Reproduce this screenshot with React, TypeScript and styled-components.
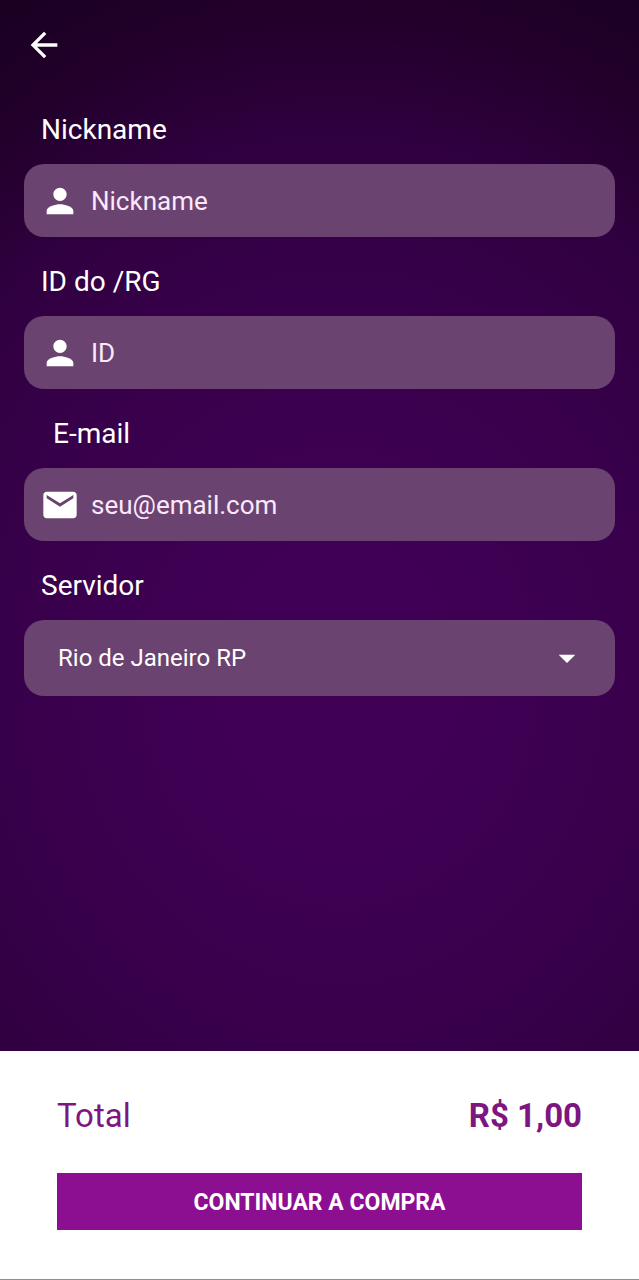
import React, { useState } from "react";
import styled, { createGlobalStyle } from "styled-components";
import { MdArrowBack, MdArrowDropDown, MdEmail, MdPerson } from "react-icons/md";

const GlobalStyle = createGlobalStyle`
  *, *::before, *::after { box-sizing: border-box; }
  body { margin: 0; background: #2c003b; }
`;

const Page = styled.div`
  display: flex;
  flex-direction: column;
  min-height: 100vh;
  font-family: Roboto, sans-serif;
  color: #fff;
  background: radial-gradient(
    ellipse 94% 54% at 53% 53%,
    #410057 0%,
    #3f0054 25%,
    #38004b 55%,
    #300040 78%,
    #210029 98%,
    #1a0021 115%
  );
`;

const TopBar = styled.header`
  display: flex;
  padding: 25px 24px 0;
`;

const BackButton = styled.button`
  display: flex;
  padding: 0;
  border: 0;
  background: none;
  color: #fff;
  cursor: pointer;
`;

const Form = styled.form`
  display: flex;
  flex-direction: column;
  gap: 27px;
  padding: 47px 24px 40px;
`;

const Field = styled.div`
  display: flex;
  flex-direction: column;
  gap: 16px;
`;

const Label = styled.label<{ $inset?: boolean }>`
  padding-left: ${(p) => (p.$inset ? 29 : 17)}px;
  font-size: 28px;
  line-height: 36px;
`;

const InputBox = styled.div`
  display: flex;
  align-items: center;
  gap: 11px;
  height: 73px;
  padding: 0 16px;
  border-radius: 20px;
  background: #6b4370;

  svg { flex: none; }
`;

const TextInput = styled.input`
  flex: 1;
  min-width: 0;
  padding: 0;
  border: 0;
  outline: 0;
  background: none;
  color: #fff;
  font: 400 26px/36px Roboto, sans-serif;

  &::placeholder { color: #fbe8fc; opacity: 1; }
`;

const SelectBox = styled.div`
  display: grid;
  align-items: center;
  height: 76px;
  border-radius: 20px;
  background: #6b4370;

  > * { grid-area: 1 / 1; }
  svg {
    justify-self: end;
    margin-right: 28px;
    pointer-events: none;
  }
`;

const Select = styled.select`
  width: 100%;
  height: 100%;
  padding: 0 80px 0 34px;
  border: 0;
  outline: 0;
  appearance: none;
  background: none;
  color: #fff;
  font: 400 24px/36px Roboto, sans-serif;

  option { color: #2c003b; }
`;

const Footer = styled.footer`
  display: flex;
  flex-direction: column;
  gap: 37px;
  margin-top: auto;
  padding: 45px 57px 49px;
  border-bottom: 1px solid #938c95;
  background: #fff;
`;

const TotalRow = styled.div`
  display: flex;
  justify-content: space-between;
  color: #7d1681;
  font-size: 33px;
  line-height: 40px;
`;

const ContinueButton = styled.button`
  height: 57px;
  padding: 2px 0 0;
  border: 0;
  background: #8d0f91;
  color: #fff;
  font: 700 23px/32px Roboto, sans-serif;
  text-transform: uppercase;
  cursor: pointer;
`;

const fields = [
  { id: "nickname", label: "Nickname", placeholder: "Nickname", type: "text", Icon: MdPerson },
  { id: "player-id", label: "ID do /RG", placeholder: "ID", type: "text", Icon: MdPerson },
  { id: "email", label: "E-mail", placeholder: "seu@email.com", type: "email", Icon: MdEmail, inset: true },
];

export default function App() {
  const [server, setServer] = useState("rio");

  return (
    <Page>
      <GlobalStyle />
      <TopBar>
        <BackButton type="button" aria-label="Voltar">
          <MdArrowBack size={40} />
        </BackButton>
      </TopBar>
      <Form id="checkout" onSubmit={(e) => e.preventDefault()}>
        {fields.map(({ id, label, placeholder, type, Icon, inset }) => (
          <Field key={id}>
            <Label htmlFor={id} $inset={inset}>{label}</Label>
            <InputBox>
              <Icon size={40} />
              <TextInput id={id} type={type} placeholder={placeholder} />
            </InputBox>
          </Field>
        ))}
        <Field>
          <Label htmlFor="server">Servidor</Label>
          <SelectBox>
            <Select id="server" value={server} onChange={(e) => setServer(e.target.value)}>
              <option value="rio">Rio de Janeiro RP</option>
            </Select>
            <MdArrowDropDown size={40} />
          </SelectBox>
        </Field>
      </Form>
      <Footer>
        <TotalRow>
          <span>Total</span>
          <strong>R$ 1,00</strong>
        </TotalRow>
        <ContinueButton type="submit" form="checkout">Continuar a compra</ContinueButton>
      </Footer>
    </Page>
  );
}
